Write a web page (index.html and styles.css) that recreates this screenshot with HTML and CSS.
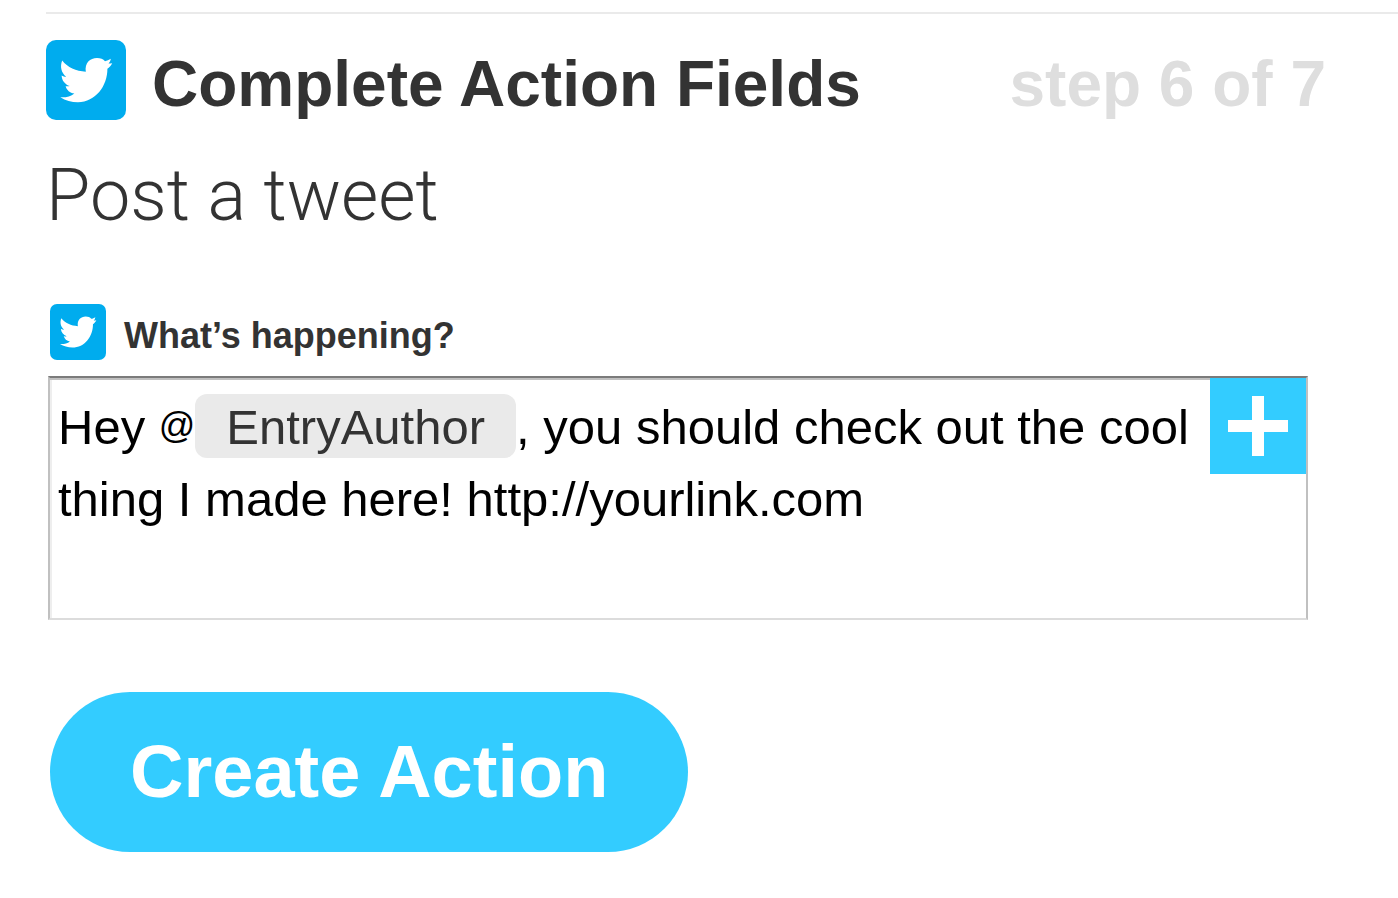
FILE: index.html
```html
<!DOCTYPE html>
<html lang="en">
<head>
<meta charset="utf-8">
<meta name="viewport" content="width=device-width, initial-scale=1">
<title>Complete Action Fields</title>
<link rel="stylesheet" href="styles.css">
</head>
<body>
<svg class="sprite" aria-hidden="true">
  <symbol id="bird" viewBox="0 0 80 80">
    <path d="M16.2 20.5C21.500 27.500 30 31 39.800 31.800C38.500 23 44 18 51 18C54.500 18 57.200 19.200 59 21.200C61 21 63 20 64.800 18.800C64.500 20.800 63.700 22.400 62.500 23.600C63.800 23.600 65 23.400 66.200 23.200C65 25.600 63.200 27.400 61.400 28.800C61.500 46 49.500 62.200 32 62.200C25.500 62.200 19.500 60.500 14.300 57.200C19.500 57.600 24.600 56.600 28.400 53.400C23.800 53 20.800 50 19.600 46.200C21 46.400 22.400 46.400 23.800 46C19 44.400 15.800 40.400 15.600 35.400C17 36.200 18.600 36.800 20.200 36.800C15.200 32.600 13.800 26.600 16.200 20.500Z"/>
  </symbol>
</svg>
<main class="step">
  <header class="step-header">
    <svg class="channel-icon" aria-hidden="true"><use href="#bird"/></svg>
    <h1 class="step-title">Complete Action Fields</h1>
    <span class="step-count">step 6 of 7</span>
  </header>
  <h2 class="action-name">Post a tweet</h2>
  <form class="action-form">
    <div class="field-label">
      <svg class="channel-icon channel-icon-small" viewBox="0 0 80 80" aria-hidden="true"><use href="#bird" width="80" height="80"/></svg>
      <span id="tweet-label">What’s happening?</span>
    </div>
    <div class="field">
      <div class="field-text" contenteditable="true" spellcheck="false" role="textbox" aria-multiline="true" aria-labelledby="tweet-label">Hey <span class="at">@</span><span class="ingredient" contenteditable="false">EntryAuthor</span>, you should check out the cool thing I made here! http://yourlink.com</div>
      <button class="add-ingredient" type="button" aria-label="Add ingredient">
        <svg class="plus" viewBox="0 0 60 60" aria-hidden="true"><path d="M24 0h12v24h24v12H36v24H24V36H0V24h24z"/></svg>
      </button>
    </div>
    <button class="create" type="submit">Create Action</button>
  </form>
</main>
</body>
</html>
```
FILE: styles.css
```css
* {
  box-sizing: border-box;
}

body {
  margin: 0;
  background: #fff;
  color: #333;
  font-family: "Liberation Sans", Arial, sans-serif;
}

.sprite {
  display: none;
}

.step {
  margin: 12px 0 0 46px;
  border-top: 2px solid #eaeaea;
}

.step-header {
  display: flex;
  align-items: center;
  gap: 26px;
  padding: 26px 72px 0 0;
}

.channel-icon {
  flex: none;
  width: 80px;
  height: 80px;
  border-radius: 10px;
  background: #00acee;
  fill: #fff;
}

.channel-icon-small {
  width: 56px;
  height: 56px;
  border-radius: 7px;
}

.step-title {
  flex: 1;
  margin: 0;
  padding-top: 8px;
  font-size: 64px;
  line-height: 72px;
}

.step-count {
  padding-top: 8px;
  color: #dedede;
  font-size: 64px;
  font-weight: bold;
  line-height: 72px;
}

.action-name {
  margin: 32px 0 0;
  font-family: Roboto, "Liberation Sans", sans-serif;
  font-size: 72px;
  font-weight: 300;
  line-height: 88px;
}

.action-form {
  padding: 64px 90px 0 2px;
}

.field-label {
  display: flex;
  align-items: center;
  gap: 18px;
  padding-left: 2px;
  font-size: 36px;
  font-weight: bold;
  line-height: 48px;
}

.field-label span {
  padding-top: 8px;
}

.field {
  display: flex;
  align-items: flex-start;
  margin-top: 16px;
  border: 2px solid;
  border-color: #7b7b7b #c0c0c0 #dcdcdc #c0c0c0;
  box-shadow: inset 0 2px #c0c0c0, inset 2px 0 #eee;
}

.field-text {
  flex: 1;
  min-height: 240px;
  padding: 13px 8px;
  outline: none;
  color: #000;
  font-size: 49px;
  line-height: 72px;
}

.at {
  font-size: 36px;
  line-height: 1;
  vertical-align: 6px;
}

.ingredient {
  display: inline-block;
  padding: 2px 31px 0;
  border-radius: 12px;
  background: #eaeaea;
  color: #333;
  line-height: 62px;
}

.add-ingredient {
  display: flex;
  align-items: center;
  justify-content: center;
  width: 96px;
  height: 96px;
  padding: 0;
  border: 0;
  background: #3cf;
}

.plus {
  width: 60px;
  height: 60px;
  fill: #fff;
}

.create {
  display: block;
  margin: 72px 0 0 2px;
  padding: 36px 80px;
  border: 0;
  border-radius: 80px;
  background: #3cf;
  color: #fff;
  font-family: inherit;
  font-size: 74px;
  font-weight: bold;
  line-height: 88px;
}
```
